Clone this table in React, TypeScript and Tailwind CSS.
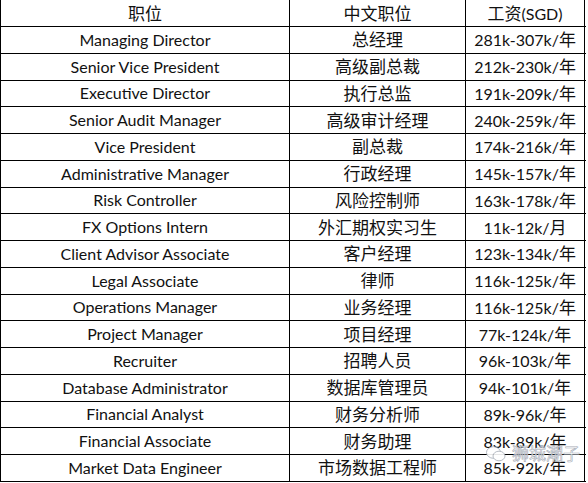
const rows: [string, string, string][] = [
  ['Managing Director', '总经理', '281k-307k/年'],
  ['Senior Vice President', '高级副总裁', '212k-230k/年'],
  ['Executive Director', '执行总监', '191k-209k/年'],
  ['Senior Audit Manager', '高级审计经理', '240k-259k/年'],
  ['Vice President', '副总裁', '174k-216k/年'],
  ['Administrative Manager', '行政经理', '145k-157k/年'],
  ['Risk Controller', '风险控制师', '163k-178k/年'],
  ['FX Options Intern', '外汇期权实习生', '11k-12k/月'],
  ['Client Advisor Associate', '客户经理', '123k-134k/年'],
  ['Legal Associate', '律师', '116k-125k/年'],
  ['Operations Manager', '业务经理', '116k-125k/年'],
  ['Project Manager', '项目经理', '77k-124k/年'],
  ['Recruiter', '招聘人员', '96k-103k/年'],
  ['Database Administrator', '数据库管理员', '94k-101k/年'],
  ['Financial Analyst', '财务分析师', '89k-96k/年'],
  ['Financial Associate', '财务助理', '83k-89k/年'],
  ['Market Data Engineer', '市场数据工程师', '85k-92k/年'],
];

// CJK runs are set a touch larger than the Latin text, as in the sheet
function Mixed({ text }: { text: string }) {
  const parts = text.split(/([\u3400-\u9fff]+)/);
  return (
    <span>
      {parts.map((p, i) =>
        /[\u3400-\u9fff]/.test(p) ? (
          <span key={i} className="text-[17px]">
            {p}
          </span>
        ) : (
          p
        ),
      )}
    </span>
  );
}

function Row({ cells, first }: { cells: [string, string, string]; first?: boolean }) {
  return (
    <div
      className={`grid grid-cols-[289px_176px_119px] border-b border-black ${
        first ? 'h-[27px]' : 'h-[26.75px]'
      }`}
    >
      {cells.map((c, i) => (
        <div key={i} className="flex items-center justify-center border-r border-black leading-none">
          <Mixed text={c} />
        </div>
      ))}
    </div>
  );
}

function Watermark() {
  return (
    <div className="absolute left-[486px] top-[445px] flex items-center gap-[6px] opacity-90">
      <svg width="20" height="16" viewBox="0 0 20 16" fill="white" stroke="#9ca3af" strokeWidth="0.8">
        <ellipse cx="7.5" cy="6.5" rx="7" ry="5.8" />
        <ellipse cx="13" cy="10" rx="6" ry="4.8" />
      </svg>
      <span
        className="text-[17px] leading-none text-white"
        style={{ WebkitTextStroke: '0.6px #9ca3af' }}
      >
        狮城潮子
      </span>
    </div>
  );
}

export default function App() {
  return (
    <div
      className="relative h-[483px] w-[588px] overflow-hidden bg-white text-[16px] text-[#111]"
      style={{ fontFamily: '"Lato", "Noto Sans CJK SC", sans-serif' }}
    >
      <div className="w-[586px] border-l border-black">
        <Row cells={['职位', '中文职位', '工资(SGD)']} first />
        {rows.map((r) => (
          <Row key={r[0]} cells={r} />
        ))}
      </div>
      <Watermark />
    </div>
  );
}
